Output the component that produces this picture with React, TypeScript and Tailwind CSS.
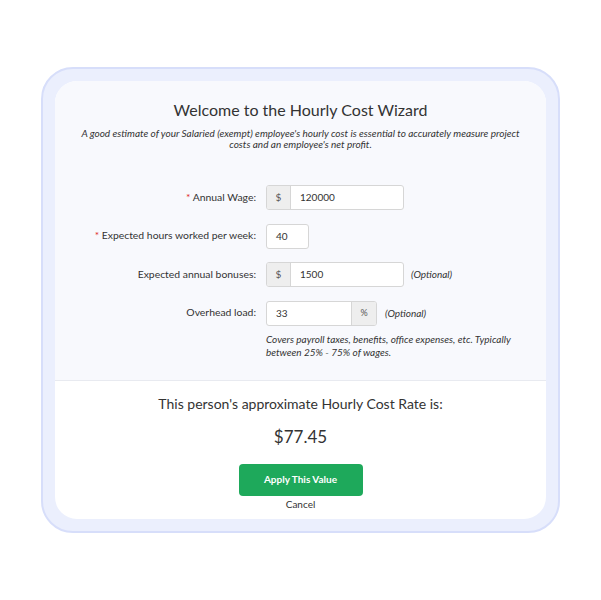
import React from "react";

function Row({ label, required, children }: { label: string; required?: boolean; children: React.ReactNode }) {
  return (
    <div className="flex items-center">
      <div className="w-[191px] pr-[10px] text-right text-[10.4px] text-[#333]">
        {required && <span className="text-[#e02b2b]">* </span>}
        {label}:
      </div>
      <div className="flex items-center">{children}</div>
    </div>
  );
}

export default function App() {
  return (
    <div className="min-h-[600px] bg-white pt-[67px] font-['Lato',sans-serif]">
      <div className="mx-auto w-[519px] rounded-[32px] border-2 border-[#d7defa] bg-[#ebeffd] p-[12px]">
        <div className="overflow-hidden rounded-[22px] bg-white">
          <div className="bg-[#f8f9fd] px-5 pb-[21px] pt-[19px] text-center">
            <h1 className="text-[16px] leading-[20px] text-[#333]">Welcome to the Hourly Cost Wizard</h1>
            <p className="mt-[8px] text-[10px] leading-[11px] italic text-[#333]">
              A good estimate of your Salaried (exempt) employee's hourly cost is essential to accurately measure project
              <br />
              costs and an employee's net profit.
            </p>
            <div className="mt-[35px] flex flex-col gap-[13.5px] text-left">
              <Row label="Annual Wage" required>
                <div className="flex h-[25px] w-[138px] overflow-hidden rounded-[3px] border border-[#d6d6d6] bg-white text-[10px] text-[#333]">
                  <span className="flex w-[24px] items-center justify-center border-r border-[#d6d6d6] bg-[#eeeeee] text-[#555]">$</span>
                  <span className="flex items-center pl-[9px]">120000</span>
                </div>
              </Row>
              <Row label="Expected hours worked per week" required>
                <div className="flex h-[25px] w-[43px] items-center rounded-[3px] border border-[#d6d6d6] bg-white pl-[9px] text-[10px] text-[#333]">40</div>
              </Row>
              <Row label="Expected annual bonuses">
                <div className="flex h-[25px] w-[138px] overflow-hidden rounded-[3px] border border-[#d6d6d6] bg-white text-[10px] text-[#333]">
                  <span className="flex w-[24px] items-center justify-center border-r border-[#d6d6d6] bg-[#eeeeee] text-[#555]">$</span>
                  <span className="flex items-center pl-[9px]">1500</span>
                </div>
                <span className="ml-[7px] text-[10px] italic text-[#333]">(Optional)</span>
              </Row>
              <Row label="Overhead load">
                <div className="flex h-[25px] w-[111px] overflow-hidden rounded-[3px] border border-[#d6d6d6] bg-white text-[10px] text-[#333]">
                  <span className="flex flex-1 items-center pl-[9px]">33</span>
                  <span className="flex w-[25px] items-center justify-center border-l border-[#d6d6d6] bg-[#eeeeee] text-[9px] text-[#555]">%</span>
                </div>
                <span className="ml-[8px] text-[10px] italic text-[#333]">(Optional)</span>
              </Row>
            </div>
            <p className="ml-[191px] mt-[7px] whitespace-nowrap text-left text-[10px] leading-[13px] italic text-[#333]">
              Covers payroll taxes, benefits, office expenses, etc. Typically
              <br />
              between 25% - 75% of wages.
            </p>
          </div>
          <div className="flex flex-col items-center border-t border-[#e8eaf0] pb-[8px] pt-[14px]">
            <div className="text-[14px] leading-[18px] text-[#333]">This person's approximate Hourly Cost Rate is:</div>
            <div className="mt-[14px] text-[17px] leading-[20px] text-[#333]">$77.45</div>
            <button className="mt-[17px] h-[32px] w-[124px] rounded-[4px] bg-[#1ea95b] text-[10px] font-bold text-white">
              Apply This Value
            </button>
            <span className="mt-[1px] text-[10px] leading-[14px] text-[#333]">Cancel</span>
          </div>
        </div>
      </div>
    </div>
  );
}
